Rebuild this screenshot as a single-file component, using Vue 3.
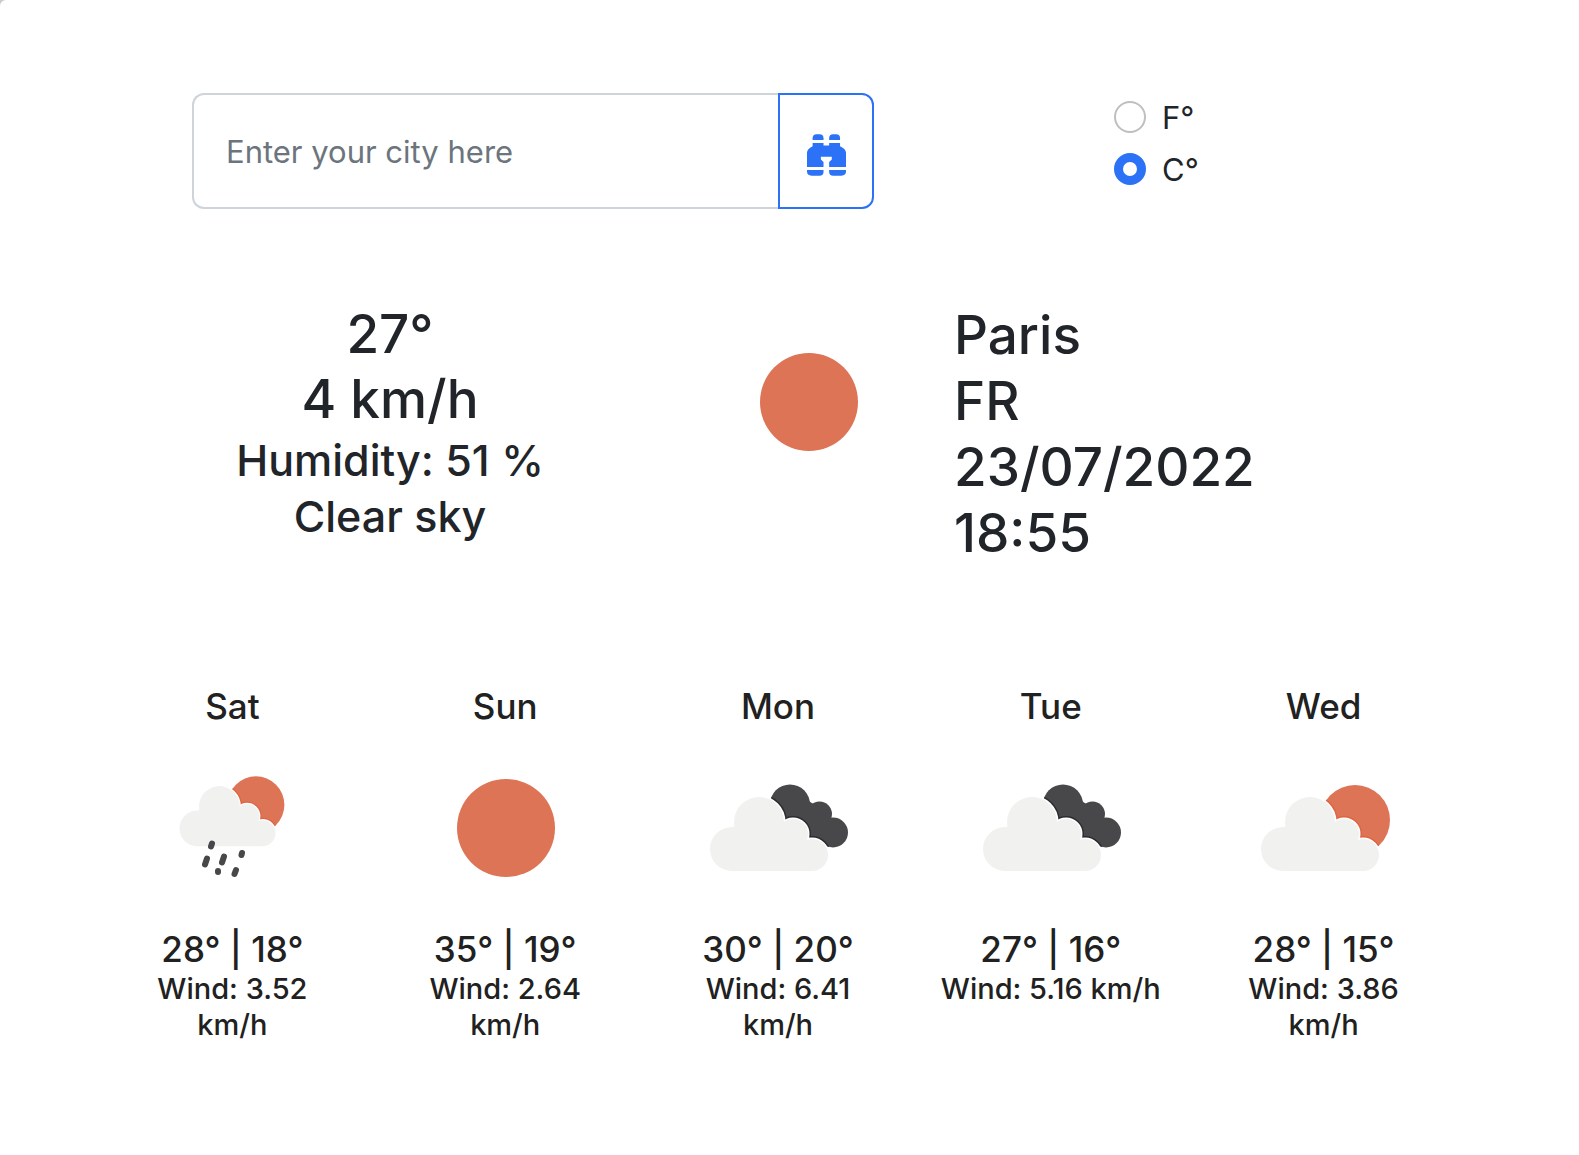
<script setup>
import { ref } from 'vue'

const city = ref('')
const unit = ref('C')
const forecast = [
  { day: 'Sat', icon: 'rain', max: 28, min: 18, wind: '3.52' },
  { day: 'Sun', icon: 'clear', max: 35, min: 19, wind: '2.64' },
  { day: 'Mon', icon: 'broken', max: 30, min: 20, wind: '6.41' },
  { day: 'Tue', icon: 'broken', max: 27, min: 16, wind: '5.16' },
  { day: 'Wed', icon: 'few', max: 28, min: 15, wind: '3.86' }
]
</script>

<template>
  <main class="page">
    <svg class="defs" aria-hidden="true">
      <defs>
        <g id="cloud">
          <circle cx="54" cy="121" r="22" />
          <circle cx="81" cy="94" r="25" />
          <circle cx="115" cy="106" r="15" />
          <circle cx="134" cy="127" r="16" />
          <path d="M57 93H105L134 123V143H54V121Z" />
        </g>
        <g id="back-cloud">
          <circle cx="112" cy="76.5" r="20" />
          <circle cx="141.5" cy="86" r="12.5" />
          <circle cx="155" cy="104.5" r="15" />
          <path d="M112 60L141 80L155 98V116L146 116L100 95Z" />
        </g>
        <clipPath id="back-clip">
          <circle cx="112" cy="76.5" r="20" />
          <circle cx="141.5" cy="86" r="12.5" />
          <circle cx="155" cy="104.5" r="15" />
          <path d="M112 60L141 80L155 98V116L146 116L100 95Z" />
        </clipPath>
        <clipPath id="few-clip"><circle cx="126" cy="92" r="35" /></clipPath>
      </defs>
    </svg>

    <header class="top">
      <form class="search" @submit.prevent>
        <input v-model="city" class="city" type="text" placeholder="Enter your city here" aria-label="City" />
        <button class="go" type="submit" aria-label="Search">
          <svg viewBox="0 0 118 125" width="39" height="42" fill="currentColor">
            <path d="M17 17V12Q17 0 29 0H38Q50 0 50 12V17Z" />
            <path d="M67 17V12Q67 0 79 0H88Q100 0 100 12V17Z" />
            <path d="M17 26H50V34H67V26H100V36Q118 44 118 56V99H67V84L75 76V68H42V76L50 84V99H0V56Q0 44 17 36Z" />
            <path d="M0 108H50V113Q50 125 38 125H14Q0 125 0 112Z" />
            <path d="M67 108H118V112Q118 125 104 125H79Q67 125 67 113Z" />
          </svg>
        </button>
      </form>
      <div class="units" role="radiogroup" aria-label="Units">
        <label class="unit"><input v-model="unit" type="radio" name="unit" value="F" />F°</label>
        <label class="unit"><input v-model="unit" type="radio" name="unit" value="C" />C°</label>
      </div>
    </header>

    <section class="now">
      <div class="reading">
        <h1>27°</h1>
        <h1>4 km/h</h1>
        <h2>Humidity: 51 %</h2>
        <h2>Clear sky</h2>
      </div>
      <svg class="icon now-icon" viewBox="0 0 200 200" role="img" aria-label="Clear sky">
        <circle cx="100" cy="100" r="49" class="sun" />
      </svg>
      <div class="place">
        <h1>Paris</h1>
        <h1>FR</h1>
        <h1>23/07/2022</h1>
        <h1>18:55</h1>
      </div>
    </section>

    <section class="forecast">
      <article v-for="f in forecast" :key="f.day" class="day">
        <h3>{{ f.day }}</h3>
        <svg class="icon" viewBox="0 0 200 200" aria-hidden="true">
          <circle v-if="f.icon === 'clear'" cx="101" cy="100" r="49" class="sun" />
          <template v-else-if="f.icon === 'broken'">
            <use href="#back-cloud" class="dark" />
            <g clip-path="url(#back-clip)"><use href="#cloud" class="edge-dark" /></g>
            <use href="#cloud" class="halo" />
            <use href="#cloud" class="cloud" />
          </template>
          <g v-else-if="f.icon === 'few'" transform="translate(5 0)">
            <circle cx="126" cy="92" r="35" class="sun" />
            <g clip-path="url(#few-clip)"><use href="#cloud" class="edge-sun" /></g>
            <use href="#cloud" class="halo" />
            <use href="#cloud" class="cloud" />
          </g>
          <template v-else>
            <g transform="translate(21.5 2) scale(.813)">
              <circle cx="126" cy="92" r="35" class="sun" />
              <g clip-path="url(#few-clip)"><use href="#cloud" class="edge-sun" /></g>
              <use href="#cloud" class="halo" />
              <use href="#cloud" class="cloud" />
            </g>
            <path
              class="rain"
              d="M80 115.5L79 118.5M75 130.5L73 136.5M92 128.5L90 134.5M110 125L109.5 127M86 143L86 144M104 142L102.5 146"
            />
          </template>
        </svg>
        <h3>{{ f.max }}° | {{ f.min }}°</h3>
        <p>Wind: {{ f.wind }} km/h</p>
      </article>
    </section>
  </main>
</template>

<style>
body {
  margin: 0;
  background: #c5cdd3;
}
</style>

<style scoped>
.page {
  box-sizing: border-box;
  min-height: 100vh;
  padding: 93px 119px 93px 96px;
  background: #fff;
  border-top-left-radius: 6px;
  color: #212529;
  font-family: Inter, "Liberation Sans", sans-serif;
}
.defs {
  position: absolute;
  width: 0;
  height: 0;
}
.top {
  display: flex;
  gap: 240px;
  padding-left: 96px;
}
.search {
  display: flex;
  flex: 0 1 682px;
  height: 116px;
}
.city {
  box-sizing: border-box;
  flex: 1;
  min-width: 0;
  padding: 0 32px;
  border: 2px solid #ced4da;
  border-right: 0;
  border-radius: 12px 0 0 12px;
  background: #fff;
  color: #212529;
  font: 400 31px Inter, sans-serif;
}
.city::placeholder {
  color: #6c757d;
  opacity: 1;
}
.go {
  box-sizing: border-box;
  display: flex;
  align-items: center;
  justify-content: center;
  width: 96px;
  padding: 8px 0 0;
  border: 2px solid #2b72f6;
  border-radius: 0 12px 12px 0;
  background: #fff;
  color: #2b72f6;
}
.units {
  display: flex;
  flex-direction: column;
  gap: 4px;
}
.unit {
  display: flex;
  align-items: center;
  gap: 16px;
  height: 48px;
  font-size: 31px;
}
.unit input {
  appearance: none;
  box-sizing: border-box;
  width: 32px;
  height: 32px;
  margin: 0;
  border: 2px solid #bfbfbf;
  border-radius: 50%;
  background: #fff;
}
.unit input:checked {
  border: 9px solid #2b72f6;
}
h1,
h2,
h3,
p {
  margin: 0;
  font-weight: 500;
}
h1 {
  font-size: 53px;
  line-height: 66px;
}
h2 {
  font-size: 43px;
  line-height: 56px;
}
h3 {
  font-size: 35px;
  line-height: 43px;
}
p {
  font-size: 29px;
  line-height: 36px;
}
.now {
  display: grid;
  grid-template-columns: 588fr 225fr 551fr;
  margin-top: 93px;
}
.reading {
  text-align: center;
}
.reading h1 {
  line-height: 65px;
}
.icon {
  display: block;
  width: 200px;
  height: 200px;
}
.now-icon {
  justify-self: end;
}
.place {
  padding-left: 45px;
}
.forecast {
  display: grid;
  grid-template-columns: repeat(5, 1fr);
  margin-top: 119px;
  color: #212121;
}
.day {
  display: flex;
  flex-direction: column;
  align-items: center;
  padding: 0 26px;
  text-align: center;
}
.sun {
  fill: #dd7455;
}
.cloud {
  fill: #f1f1f0;
}
.halo {
  fill: #fff;
  stroke: #fff;
  stroke-width: 3px;
}
.dark {
  fill: #48484a;
}
.edge-dark {
  fill: #2c2c2e;
  stroke: #2c2c2e;
  stroke-width: 6px;
}
.edge-sun {
  fill: #de6542;
  stroke: #de6542;
  stroke-width: 6px;
}
.rain {
  fill: none;
  stroke: #48484a;
  stroke-width: 6px;
  stroke-linecap: round;
}
</style>
